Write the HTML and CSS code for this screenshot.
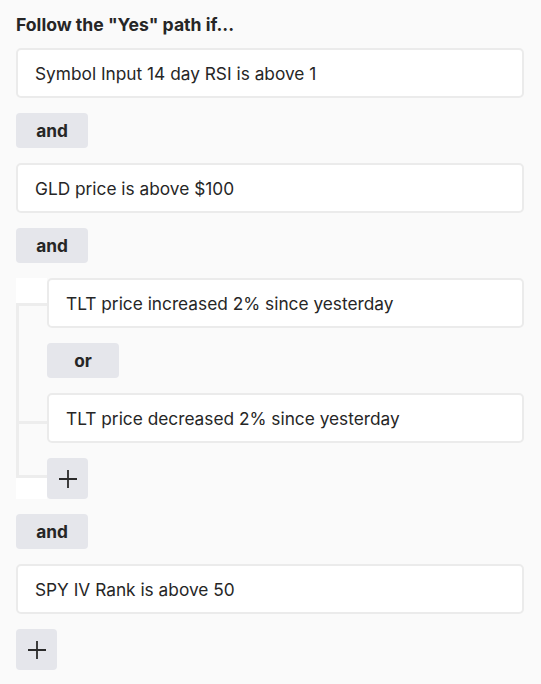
FILE: index.html
```html
<!DOCTYPE html>
<html lang="en">
<head>
<meta charset="utf-8">
<title>Conditions</title>
<link rel="stylesheet" href="styles.css">
</head>
<body>
<div class="page">
  <h1 class="title">Follow the "Yes" path if...</h1>
  <div class="stack">
    <div class="card">Symbol Input 14 day RSI is above 1</div>
    <button class="op">and</button>
    <div class="card">GLD price is above $100</div>
    <button class="op">and</button>
    <div class="group">
      <div class="rail">
        <span class="cap"></span>
        <span class="branch"></span>
        <span class="cap cap-bottom"></span>
      </div>
      <div class="stack">
        <div class="card">TLT price increased 2% since yesterday</div>
        <button class="op">or</button>
        <div class="card">TLT price decreased 2% since yesterday</div>
        <button class="add" aria-label="Add condition">
          <svg width="20" height="20" viewBox="0 0 20 20"><path d="M10 1v18M1 10h18" stroke="#2b2b2b" stroke-width="1.8" fill="none"/></svg>
        </button>
      </div>
    </div>
    <button class="op">and</button>
    <div class="card">SPY IV Rank is above 50</div>
    <button class="add" aria-label="Add condition">
      <svg width="20" height="20" viewBox="0 0 20 20"><path d="M10 1v18M1 10h18" stroke="#2b2b2b" stroke-width="1.8" fill="none"/></svg>
    </button>
  </div>
</div>
</body>
</html>
```
FILE: styles.css
```css
html, body {
  margin: 0;
  padding: 0;
  background: #fafafa;
}
body {
  font-family: Inter, "Open Sans", "Liberation Sans", sans-serif;
  color: #262626;
}
.page {
  padding: 13px 17px 16px 16px;
}
.title {
  margin: 0 0 11px;
  font-size: 17.6px;
  line-height: 24px;
  font-weight: 700;
  color: #262626;
}
.stack {
  display: flex;
  flex-direction: column;
  align-items: flex-start;
  gap: 15px;
}
.card {
  align-self: stretch;
  box-sizing: border-box;
  height: 50px;
  display: flex;
  align-items: center;
  padding: 0 16px 0 17px;
  background: #fff;
  border: 2px solid #ebebeb;
  border-radius: 5px;
  font-size: 17.3px;
  color: #262626;
}
.op {
  box-sizing: border-box;
  width: 72px;
  height: 35px;
  border: 0;
  border-radius: 4px;
  background: #e5e6eb;
  font-family: inherit;
  font-size: 17.3px;
  font-weight: 700;
  color: #262626;
  padding: 0;
}
.add {
  box-sizing: border-box;
  width: 41px;
  height: 41px;
  border: 0;
  border-radius: 4px;
  background: #e5e6eb;
  padding: 0;
  display: flex;
  align-items: center;
  justify-content: center;
}
.group {
  align-self: stretch;
  display: flex;
}
.group > .stack {
  flex: 1;
}
.rail {
  width: 31px;
  flex: none;
  display: flex;
  flex-direction: column;
}
.cap {
  display: block;
  height: 25px;
  background: #fff;
}
.cap-bottom {
  height: 21px;
}
.branch {
  display: block;
  flex: 1;
  position: relative;
  border-left: 3px solid #ededed;
  border-top: 3px solid #ededed;
  border-bottom: 3px solid #ededed;
}
.branch::after {
  content: "";
  position: absolute;
  top: 115px;
  left: 0;
  right: 0;
  height: 3px;
  background: #ededed;
}
```
